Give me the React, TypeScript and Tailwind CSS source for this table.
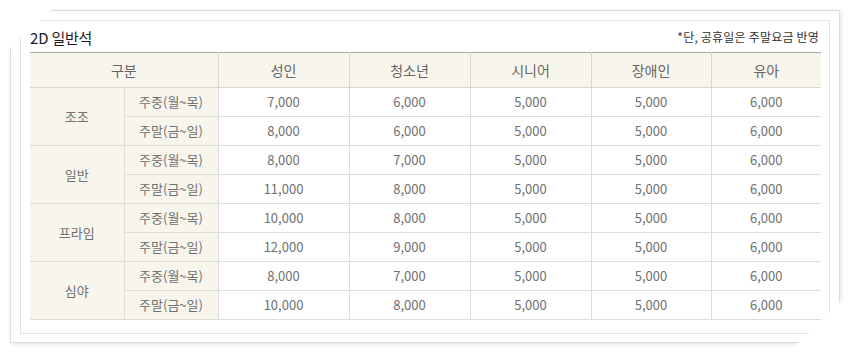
import React from "react";

const rows = [
  { group: "조조", items: [["주중(월~목)", "7,000", "6,000", "5,000", "5,000", "6,000"], ["주말(금~일)", "8,000", "6,000", "5,000", "5,000", "6,000"]] },
  { group: "일반", items: [["주중(월~목)", "8,000", "7,000", "5,000", "5,000", "6,000"], ["주말(금~일)", "11,000", "8,000", "5,000", "5,000", "6,000"]] },
  { group: "프라임", items: [["주중(월~목)", "10,000", "8,000", "5,000", "5,000", "6,000"], ["주말(금~일)", "12,000", "9,000", "5,000", "5,000", "6,000"]] },
  { group: "심야", items: [["주중(월~목)", "8,000", "7,000", "5,000", "5,000", "6,000"], ["주말(금~일)", "10,000", "8,000", "5,000", "5,000", "6,000"]] },
];

const font = { fontFamily: '"Noto Sans CJK KR", "Noto Sans", sans-serif' };

export default function App() {
  return (
    <div className="relative w-[850px] h-[354px] bg-white overflow-hidden" style={font}>
      <div className="absolute left-[10px] top-[10px] w-[830px] h-[333px] border border-[#dcdcdc] bg-white shadow-[1px_1px_4px_rgba(0,0,0,0.12)] pl-[9px] pt-[9px]">
        <div className="w-[810px] h-[314px] border border-[#e2e2e2] px-[9px] flex flex-col">
          <div className="h-[31px] flex items-center justify-between">
            <span className="text-[15px] text-[#1a1a1a] tracking-[-0.2px] leading-none pt-[1px]">2D 일반석</span>
            <span className="text-[12px] text-[#333] leading-none pr-[1px] tracking-[0.2px]">*단, 공휴일은 주말요금 반영</span>
          </div>
          <table className="border-collapse table-fixed w-[791px] text-[13px] text-[#707070]">
            <colgroup>
              <col className="w-[94px]" />
              <col className="w-[94px]" />
              <col className="w-[131px]" />
              <col className="w-[121px]" />
              <col className="w-[121px]" />
              <col className="w-[120px]" />
              <col className="w-[110px]" />
            </colgroup>
            <thead>
              <tr className="h-[35px] bg-[#f8f6ec] border-t border-t-[#a9a9a9] text-[14px] text-[#666]">
                <th colSpan={2} className="font-normal border-b border-r border-[#d6d6d6]">구분</th>
                <th className="font-normal border-b border-r border-[#d6d6d6]">성인</th>
                <th className="font-normal border-b border-r border-[#d6d6d6]">청소년</th>
                <th className="font-normal border-b border-r border-[#d6d6d6]">시니어</th>
                <th className="font-normal border-b border-r border-[#d6d6d6]">장애인</th>
                <th className="font-normal border-b border-[#d6d6d6]">유아</th>
              </tr>
            </thead>
            <tbody>
              {rows.map((g) =>
                g.items.map((r, i) => (
                  <tr key={g.group + i} className="h-[29px]">
                    {i === 0 && (
                      <td rowSpan={2} className="bg-[#f8f6ec] text-center border-b border-r border-[#dcdcdc]">
                        {g.group}
                      </td>
                    )}
                    <td className="bg-[#f8f6ec] text-center border-b border-r border-[#dcdcdc]">{r[0]}</td>
                    {r.slice(1).map((v, j) => (
                      <td key={j} className={`text-center border-b border-[#dcdcdc] ${j < 4 ? "border-r" : ""}`}>
                        {v}
                      </td>
                    ))}
                  </tr>
                ))
              )}
            </tbody>
          </table>
        </div>
      </div>
      <svg className="absolute left-0 top-0" width="850" height="354" viewBox="0 0 850 354">
        <defs>
          <linearGradient id="tl" x1="0" y1="0" x2="1" y2="1">
            <stop offset="0.8" stopColor="#ffffff" />
            <stop offset="1" stopColor="#d8d8d8" />
          </linearGradient>
          <linearGradient id="br" x1="1" y1="1" x2="0" y2="0">
            <stop offset="0.75" stopColor="#ffffff" />
            <stop offset="1" stopColor="#cfcfcf" />
          </linearGradient>
        </defs>
        <polygon points="0,0 62,0 0,57" fill="url(#tl)" />
        <polygon points="788,354 850,292 850,354" fill="url(#br)" />
      </svg>
    </div>
  );
}
